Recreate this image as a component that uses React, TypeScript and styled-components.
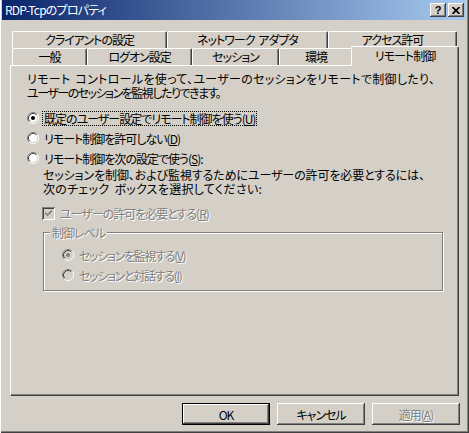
import React from "react";
import styled, { createGlobalStyle } from "styled-components";

const FACE = "#d4d0c8";
const SHADOW = "#808080";
const DARK = "#404040";

const GlobalStyle = createGlobalStyle`
  html, body {
    margin: 0;
    padding: 0;
    background: ${FACE};
  }
  body {
    font-family: "Noto Sans CJK JP", "Noto Sans", sans-serif;
    font-size: 12px;
  }
`;

const Window = styled.div`
  width: 469px;
  height: 433px;
  box-sizing: border-box;
  padding: 0 3px 3px 2px;
  background: ${FACE};
  box-shadow: inset 1px 0 #ffffff, inset -1px -1px ${DARK},
    inset -2px -2px ${SHADOW};
  display: flex;
  flex-direction: column;
  font-family: "Noto Sans CJK JP", "Noto Sans", sans-serif;
  font-size: 12px;
  font-feature-settings: "palt";
  letter-spacing: -1px;
  word-spacing: 2px;
  color: #000;
  overflow: hidden;
`;

const TitleBar = styled.div`
  height: 20px;
  display: flex;
  align-items: center;
  padding: 0 2px 0 3px;
  background: linear-gradient(to right, #0a246a, #a6caf0);
`;

const TitleText = styled.span`
  color: #fff;
  font-size: 12px;
  letter-spacing: -0.8px;
  line-height: 20px;
`;

const TitleButtons = styled.div`
  margin-left: auto;
  display: flex;
  gap: 2px;
`;

const TitleButton = styled.div`
  width: 16px;
  height: 14px;
  box-sizing: border-box;
  background: ${FACE};
  box-shadow: inset -1px -1px ${DARK}, inset 1px 1px #ffffff,
    inset -2px -2px ${SHADOW};
  display: flex;
  align-items: center;
  justify-content: center;
  font-family: "Liberation Sans", sans-serif;
  font-weight: bold;
  font-size: 11px;
  letter-spacing: 0;
  line-height: 1;
`;

const Tabs = styled.div`
  margin: 11px 0 0 10px;
  width: 445px;
  display: flex;
  flex-direction: column;
`;

const TabRow = styled.div`
  display: flex;
  height: 17px;
  align-items: flex-start;
`;

const Tab = styled.div<{ $w: number; $active?: boolean }>`
  flex: 0 0 ${(p) => (p.$active ? p.$w + 4 : p.$w)}px;
  height: ${(p) => (p.$active ? 20 : 17)}px;
  margin: ${(p) => (p.$active ? "-2px -2px 0 -2px" : "0")};
  position: relative;
  z-index: ${(p) => (p.$active ? 1 : 0)};
  box-sizing: border-box;
  background: ${FACE};
  border-top: 1px solid #fff;
  border-left: 1px solid #fff;
  border-right: 1px solid ${DARK};
  border-top-left-radius: 2px;
  border-top-right-radius: 2px;
  box-shadow: inset -1px 0 ${SHADOW};
  display: flex;
  justify-content: center;
  padding-top: ${(p) => (p.$active ? 2 : 1)}px;
  line-height: 13px;
  font-size: 12px;
  white-space: nowrap;
`;

const Panel = styled.div`
  margin-left: 8px;
  width: 449px;
  height: 331px;
  box-sizing: border-box;
  border-top: 1px solid #fff;
  border-left: 1px solid #fff;
  border-right: 1px solid ${DARK};
  border-bottom: 1px solid ${DARK};
  box-shadow: inset -1px -1px ${SHADOW};
  padding: 6px 16px 0 16px;
  display: flex;
  flex-direction: column;
`;

const Para = styled.p<{ $indent?: number; $ls: number }>`
  margin: 0 0 0 ${(p) => p.$indent || 0}px;
  line-height: 14px;
  letter-spacing: ${(p) => p.$ls}px;
  white-space: nowrap;
`;

const Options = styled.div`
  margin-top: 8px;
  display: flex;
  flex-direction: column;
`;

const Option = styled.div<{ $disabled?: boolean; $indent?: number }>`
  display: flex;
  align-items: center;
  gap: 4px;
  height: 20px;
  margin-left: ${(p) => p.$indent || 0}px;
  color: ${(p) => (p.$disabled ? SHADOW : "#000")};
  text-shadow: ${(p) => (p.$disabled ? "1px 1px 0 #fff" : "none")};
  white-space: nowrap;
`;

const Label = styled.span<{ $focus?: boolean }>`
  padding: 0 1px;
  line-height: 13px;
  outline: ${(p) => (p.$focus ? "1px dotted #000" : "none")};
  outline-offset: 0;
`;

const Box = styled.div`
  width: 13px;
  height: 13px;
  box-sizing: border-box;
  flex: 0 0 13px;
  background: ${FACE};
  box-shadow: inset 1px 1px ${SHADOW}, inset -1px -1px #fff,
    inset 2px 2px ${DARK}, inset -2px -2px ${FACE};
  display: flex;
  align-items: center;
  justify-content: center;
`;

const Group = styled.fieldset`
  margin: 3px 0 0 16px;
  padding: 0;
  width: 400px;
  height: 65px;
  box-sizing: border-box;
  border: 1px solid ${SHADOW};
  box-shadow: inset 1px 1px #fff, 1px 1px 0 #fff;
  display: flex;
  flex-direction: column;
  min-width: 0;
`;

const Legend = styled.legend`
  margin-left: 6px;
  padding: 0 2px;
  line-height: 13px;
  background: ${FACE};
  color: ${SHADOW};
  text-shadow: 1px 1px 0 #fff;
`;

const GroupOptions = styled.div`
  margin-top: 6px;
  padding-left: 18px;
  display: flex;
  flex-direction: column;
  letter-spacing: -1.3px;
`;

const ButtonBar = styled.div`
  margin-top: 7px;
  display: flex;
  justify-content: flex-end;
  gap: 7px;
  padding-right: 6px;
`;

const Button = styled.div<{ $default?: boolean; $disabled?: boolean }>`
  width: 88px;
  height: 22px;
  box-sizing: border-box;
  background: ${FACE};
  border: ${(p) => (p.$default ? "1px solid #000" : "none")};
  box-shadow: inset -1px -1px ${DARK}, inset 1px 1px #fff,
    inset -2px -2px ${SHADOW};
  display: flex;
  align-items: center;
  justify-content: center;
  color: ${(p) => (p.$disabled ? SHADOW : "#000")};
  text-shadow: ${(p) => (p.$disabled ? "1px 1px 0 #fff" : "none")};
`;

function Radio({ checked, disabled }: { checked?: boolean; disabled?: boolean }) {
  return (
    <svg width="12" height="12" viewBox="0 0 12 12" style={{ flex: "0 0 12px" }}>
      <circle cx="6" cy="6" r="5" fill={disabled ? FACE : "#fff"} />
      <path d="M2.11 9.89 A5.5 5.5 0 0 1 9.89 2.11" fill="none" stroke={SHADOW} strokeWidth="1" />
      <path d="M9.89 2.11 A5.5 5.5 0 0 1 2.11 9.89" fill="none" stroke="#fff" strokeWidth="1" />
      <path d="M2.82 9.18 A4.5 4.5 0 0 1 9.18 2.82" fill="none" stroke={DARK} strokeWidth="1" />
      <path d="M9.18 2.82 A4.5 4.5 0 0 1 2.82 9.18" fill="none" stroke={FACE} strokeWidth="1" />
      {checked && <circle cx="6" cy="6" r="2" fill={disabled ? SHADOW : "#000"} />}
    </svg>
  );
}

function Check() {
  return (
    <Box>
      <svg width="7" height="7" viewBox="0 0 7 7">
        <path d="M0 2.5 L2.5 5 L7 0.5" fill="none" stroke={SHADOW} strokeWidth="1.6" />
      </svg>
    </Box>
  );
}

const backTabs = [
  { label: "クライアントの設定", w: 155 },
  { label: "ネットワーク アダプタ", w: 161 },
  { label: "アクセス許可", w: 129 },
];

const frontTabs = [
  { label: "一般", w: 75 },
  { label: "ログオン設定", w: 105 },
  { label: "セッション", w: 87 },
  { label: "環境", w: 74 },
  { label: "リモート制御", w: 104, active: true },
];

export default function App() {
  return (
    <>
      <GlobalStyle />
      <Window>
        <TitleBar>
          <TitleText>RDP-Tcpのプロパティ</TitleText>
          <TitleButtons>
            <TitleButton>?</TitleButton>
            <TitleButton>
              <svg width="8" height="7" viewBox="0 0 8 7">
                <path d="M0.5 0 L7.5 7 M7.5 0 L0.5 7" stroke="#000" strokeWidth="1.6" />
              </svg>
            </TitleButton>
          </TitleButtons>
        </TitleBar>

        <Tabs>
          <TabRow>
            {backTabs.map((t) => (
              <Tab key={t.label} $w={t.w}>
                {t.label}
              </Tab>
            ))}
          </TabRow>
          <TabRow>
            {frontTabs.map((t) => (
              <Tab key={t.label} $w={t.w} $active={t.active}>
                {t.label}
              </Tab>
            ))}
          </TabRow>
        </Tabs>

        <Panel>
          <Para $ls={0.3}>
            リモート コントロールを使って、ユーザーのセッションをリモートで制御したり、
          </Para>
          <Para $ls={-1.5}>ユーザーのセッションを監視したりできます。</Para>

          <Options>
            <Option>
              <Radio checked />
              <Label $focus>
                既定のユーザー設定でリモート制御を使う(<u>U</u>)
              </Label>
            </Option>
            <Option>
              <Radio />
              <Label>
                リモート制御を許可しない(<u>D</u>)
              </Label>
            </Option>
            <Option>
              <Radio />
              <Label>
                リモート制御を次の設定で使う(<u>S</u>):
              </Label>
            </Option>
          </Options>

          <Para $indent={16} $ls={-0.1}>
            セッションを制御、および監視するためにユーザーの許可を必要とするには、
          </Para>
          <Para $indent={16} $ls={0.3}>
            次のチェック ボックスを選択してください:
          </Para>

          <Option $disabled $indent={15} style={{ marginTop: 7 }}>
            <Check />
            <Label>
              ユーザーの許可を必要とする(<u>R</u>)
            </Label>
          </Option>

          <Group>
            <Legend>制御レベル</Legend>
            <GroupOptions>
              <Option $disabled>
                <Radio checked disabled />
                <Label>
                  セッションを監視する(<u>V</u>)
                </Label>
              </Option>
              <Option $disabled>
                <Radio disabled />
                <Label>
                  セッションと対話する(<u>I</u>)
                </Label>
              </Option>
            </GroupOptions>
          </Group>
        </Panel>

        <ButtonBar>
          <Button $default>OK</Button>
          <Button>キャンセル</Button>
          <Button $disabled>
            適用(<u>A</u>)
          </Button>
        </ButtonBar>
      </Window>
    </>
  );
}
